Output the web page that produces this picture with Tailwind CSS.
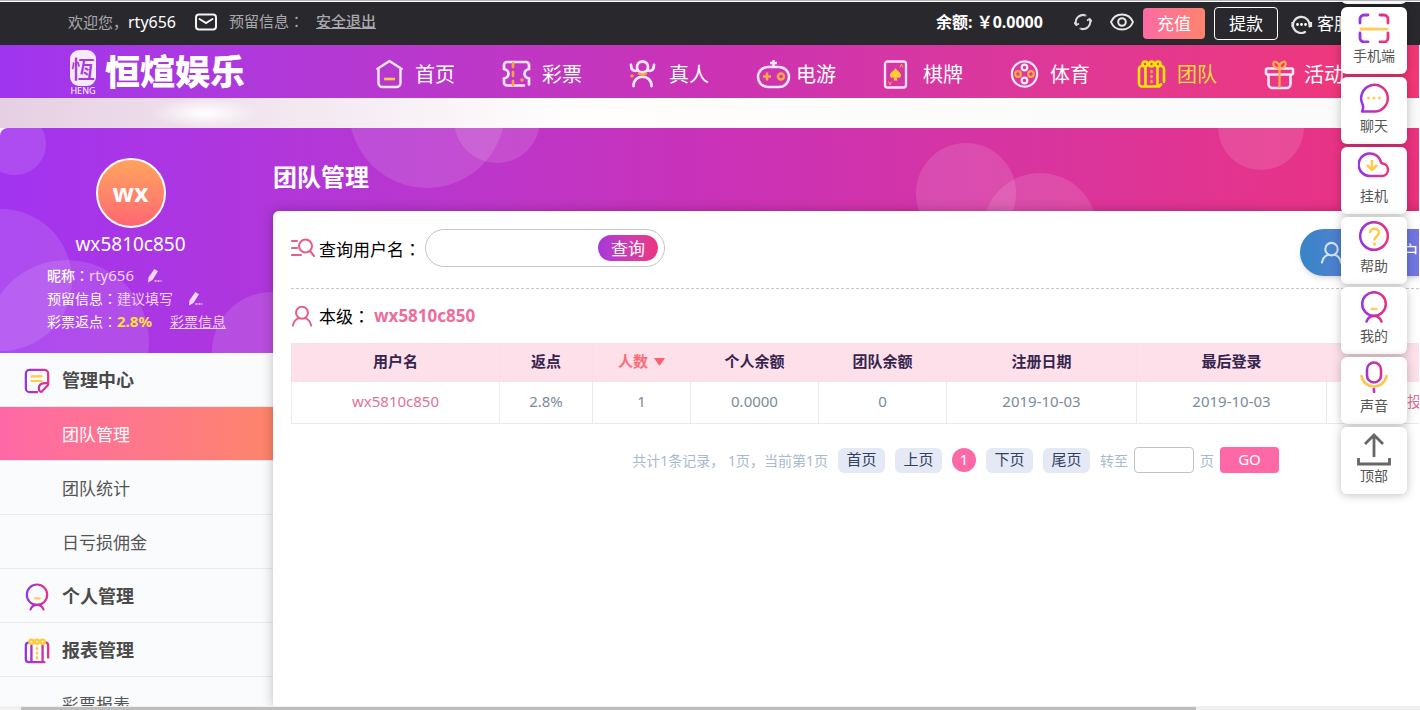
<!DOCTYPE html>
<html lang="zh-CN">
<head>
<meta charset="utf-8">
<title>团队管理</title>
<script src="https://cdn.jsdelivr.net/npm/@tailwindcss/browser@4"></script>
</head>
<body class="relative flex h-screen flex-col overflow-hidden border-t border-[#b4b4b8] bg-white font-['Noto_Sans','Noto_Sans_CJK_SC',sans-serif] text-[15px] text-[#222]">

<svg class="absolute h-0 w-0" aria-hidden="true">
  <defs>
    <linearGradient id="pg" gradientUnits="userSpaceOnUse" x1="2" y1="0" x2="30" y2="0"><stop offset="0" stop-color="#9333ea"/><stop offset="1" stop-color="#ee3377"/></linearGradient>
    <symbol id="person" viewBox="0 0 24 24"><g fill="none" stroke="currentColor" stroke-width="2.200" stroke-linecap="round"><circle cx="12" cy="8.500" r="6.500"/><path d="M2 22.500C3 17.500 6 15 9 14.300M22 22.500C21 17.500 18 15 15 14.300"/></g></symbol>
    <symbol id="edit" viewBox="0 0 16 16"><path d="M2.500 9.500L8.300 1l3.700 2.200L6.500 12l-4.500 2.500z" fill="#f0d8fb"/><path d="M8.500 13h7" stroke="#f0d8fb" stroke-width="1.600" stroke-dasharray="2 1"/></symbol>
  </defs>
</svg>

<header class="mt-px flex h-[43px] shrink-0 items-center overflow-hidden bg-[#29282c] pb-1 pl-[68px] text-[#a9a9ad]">
  <span class="w-[127px] shrink-0 whitespace-nowrap">欢迎您，<span class="text-[16px] text-white">rty656</span></span>
  <svg class="w-[22px] shrink-0" height="18" viewBox="0 0 22 18" fill="none" stroke="#f4f4f4" stroke-width="2"><rect x="1" y="1.500" width="20" height="15" rx="3"/><path d="M4.500 6l6.500 4 6.500-4" stroke-linecap="round"/></svg>
  <span class="ml-3 w-[87px] shrink-0 whitespace-nowrap">预留信息<span class="font-['Noto_Sans_CJK_TC',sans-serif]" lang="zh-TW">：</span></span>
  <a href="#" class="shrink-0 font-medium underline">安全退出</a>
  <div class="mr-[69px] ml-auto flex shrink-0 items-center">
    <strong class="w-[138px] text-[16px] whitespace-nowrap text-white">余额: ￥0.0000</strong>
    <button aria-label="刷新"><svg width="18" height="18" viewBox="0 0 18 18" fill="none" stroke="#dcdcdc" stroke-width="2"><path d="M2.300 11.500A7 7 0 0 1 11 2.300M15.700 6.500A7 7 0 0 1 7 15.700"/><path d="M4.500 3.700A7 7 0 0 1 12.500 2.900M13.500 14.300a7 7 0 0 1-8 .8" opacity=".6"/><path d="M0 9.500l2.300 2.700L5 10.500M18 8.500l-2.300-2.700L13 7.500" stroke-width="1.500"/></svg></button>
    <button aria-label="显示余额" class="ml-[18px]"><svg width="24" height="18" viewBox="0 0 24 18" fill="none" stroke="#e8e8e8" stroke-width="2"><path d="M1 9c2-5 6.500-7.600 11-7.600S21 4 23 9c-2 5-6.500 7.600-11 7.600S3 14 1 9z"/><circle cx="12" cy="9" r="3.800"/></svg></button>
    <button class="mt-1 ml-[9px] h-[31px] w-[62px] rounded bg-linear-to-r from-[#fd6aa3] to-[#fe836c] text-[17px] text-white">充值</button>
    <button class="mt-1 ml-[9px] h-[33px] w-[64px] rounded border border-white text-[17px] text-white">提款</button>
    <a href="#" class="mt-1 ml-[13px] flex items-center gap-1 text-[17px] text-white"><svg width="22" height="20" viewBox="0 0 22 20" fill="none" stroke="#e4e4e4" stroke-width="2.200"><path d="M2.500 14A8.300 8.300 0 1 1 18.500 12.500M2.500 14a8.300 8.300 0 0 0 11.500 4" stroke-linecap="round"/><path d="M1.500 8v5M20 8v5"/><g fill="#fff" stroke="none"><circle cx="6.500" cy="10.500" r="1.400"/><circle cx="10.500" cy="10.500" r="1.400"/><circle cx="14.500" cy="10.500" r="1.400"/></g></svg>客服</a>
  </div>
</header>

<nav class="mr-px flex h-[53px] shrink-0 items-center overflow-hidden bg-linear-to-r from-[#a035f0] via-[#cb32b4] to-[#f33675] pl-[70px] text-[20px] text-white">
  <a href="#" class="flex w-[305px] shrink-0 items-center gap-[9px]" aria-label="恒煊娱乐">
    <span class="flex w-[26px] flex-col items-center pt-0.5">
      <span class="flex h-[36px] w-[26px] items-center justify-center rounded-[9px] bg-white/90 font-['Noto_Sans_CJK_TC',sans-serif] text-[24px] leading-none font-medium text-[#ab36dd]">恆</span>
      <span class="text-[9px] leading-[10px]">HENG</span>
    </span>
    <span class="text-[35px] leading-none font-black">恒煊娱乐</span>
  </a>
  <div class="flex shrink-0 pt-1.5">
    <a href="#" class="flex w-[127px] shrink-0 items-center"><svg class="mr-2 w-8" height="32" viewBox="0 0 32 32" fill="none" stroke="#fbe6fa" stroke-width="2.400" stroke-linejoin="round"><path d="M1.500 10.500L14.500 2 27.500 10.500M3.500 10v14a4 4 0 0 0 4 4h14a4 4 0 0 0 4-4V10"/><path d="M9 20h11" stroke="#fc4" stroke-width="2.600"/></svg>首页</a>
    <a href="#" class="flex w-[127px] shrink-0 items-center"><svg class="mr-2 w-8" height="32" viewBox="0 0 32 32" fill="none" stroke="#fbe6fa" stroke-width="2.700" stroke-linecap="round"><path d="M22 26.500H5a3 3 0 0 1-3-3v-4c6-1.500 6-8 0-9.500v-4a3 3 0 0 1 3-3h19a3 3 0 0 1 3 3v4c-6 1.500-6 8 0 9.500v6"/><path d="M11 4v22" stroke="#fca23a" stroke-dasharray="4 5"/><circle cx="20" cy="21" r="1" stroke="#fca23a" stroke-width="1.500"/></svg>彩票</a>
    <a href="#" class="flex w-[127px] shrink-0 items-center"><svg class="mr-2 w-8" height="32" viewBox="0 0 32 32" fill="none" stroke="#fbe6fa" stroke-width="2.800" stroke-linecap="round"><circle cx="13.500" cy="8" r="5.500"/><path d="M2 6c0 5 2.500 6.500 6 5.500M25 6c0 5-2.500 6.500-6 5.500M4.500 27c0-12.500 18-12.500 18 0"/><path d="M10 14.500c2 1.500 5 1.500 7 0" stroke="#fca23a"/><circle cx="3" cy="17" r="1.300" fill="#fca23a" stroke="#fca23a" stroke-width="1"/></svg>真人</a>
    <a href="#" class="flex w-[127px] shrink-0 items-center"><svg class="mr-1 w-9" height="32" viewBox="0 0 36 32" fill="none" stroke="#fbe6fa" stroke-width="2.500"><rect x="2" y="8" width="31" height="20" rx="10"/><path d="M17.500 1v7M14 4h7"/><path d="M11 13.500v8M7 17.500h8" stroke="#fca84a"/><circle cx="25" cy="17.500" r="3" stroke="#fca84a"/></svg>电游</a>
    <a href="#" class="flex w-[127px] shrink-0 items-center"><svg class="mr-2 w-8" height="32" viewBox="0 0 32 32" fill="none" stroke="#fbe6fa" stroke-width="2.300"><rect x="2" y="2.500" width="21" height="26" rx="2.500"/><path d="M12.500 9c1.500 3 5.500 4 5.500 7.500 0 2.500-3 3-4.500 1.500l1 3.500h-4l1-3.500C10 19.500 7 19 7 16.500 7 13 11 12 12.500 9z" fill="#fc3" stroke="none"/><path d="M17 8.500l1.500-3.500L20 8.500M5.500 22.500L7 26l1.500-3.500" stroke="#fca23a" stroke-width="1"/></svg>棋牌</a>
    <a href="#" class="flex w-[127px] shrink-0 items-center"><svg class="mr-2 w-8" height="32" viewBox="0 0 32 32" fill="none" stroke="#fbe6fa" stroke-width="2.200"><circle cx="14.500" cy="15" r="12.600"/><circle cx="14.500" cy="8.500" r="2.800"/><circle cx="14.500" cy="21.500" r="2.800"/><g stroke="#fca84a"><circle cx="8" cy="15" r="2.800"/><circle cx="21" cy="15" r="2.800"/></g></svg>体育</a>
    <a href="#" class="flex w-[127px] shrink-0 items-center text-[#ffdf2a]"><svg class="mr-2 w-8" height="32" viewBox="0 0 32 32" fill="none" stroke="#ffe600" stroke-width="2.600" stroke-linecap="round"><path d="M22 27.500H5a3 3 0 0 1-3-3V10a3 3 0 0 1 3-3M8.500 8v19M20.500 8v19M24 7a3 3 0 0 1 3 3v13M22 27.500l2-2"/><path d="M14.500 12v12" stroke="#ffab2e" stroke-dasharray="1 4"/><circle cx="8" cy="5" r="2.500"/><circle cx="14.500" cy="5" r="2.500"/><circle cx="21" cy="5" r="2.500"/></svg>团队</a>
    <a href="#" class="flex w-[127px] shrink-0 items-center"><svg class="mr-2 w-8" height="32" viewBox="0 0 32 32" fill="none" stroke="#fbe6fa" stroke-width="2.600"><rect x="2" y="9.500" width="27" height="6" rx="1.500"/><path d="M4.500 16v9a4 4 0 0 0 4 4h14a4 4 0 0 0 4-4v-9"/><path d="M15.500 9v20M15.500 9C8 10 8 1 12 3c2 .8 3.500 3 3.500 6zM15.500 9c7.500 1 7.500-8 3.500-6-2 .8-3.500 3-3.500 6z" stroke="#fcb04a" stroke-width="2.200"/></svg>活动</a>
  </div>
</nav>

<div class="h-[30px] shrink-0 overflow-hidden bg-linear-to-r from-[#e6cfe3] via-[#fffefd] via-40% to-[#fafafa]">
  <div class="ml-[150px] h-full w-[110px] bg-radial from-white to-transparent to-70%"></div>
</div>

<main class="relative mr-px flex min-h-0 flex-1 overflow-hidden">
  <div class="absolute inset-x-0 top-0 h-[225px] overflow-hidden rounded-tl-lg bg-linear-to-r from-[#a233f0] via-[#c931b8] to-[#ec317f]">
    <svg width="1420" height="225" viewBox="0 0 1420 225" fill="#fff" fill-opacity=".12"><circle cx="15" cy="16" r="31"/><circle cx="1" cy="152" r="71"/><circle cx="67" cy="214" r="82"/><circle cx="272" cy="224" r="60"/><circle cx="427" cy="-18" r="78"/><circle cx="497" cy="-8" r="43"/><circle cx="966" cy="65" r="50"/><circle cx="1040" cy="102" r="57"/><circle cx="1261" cy="-1" r="43"/></svg>
  </div>

  <aside class="relative flex w-[273px] shrink-0 flex-col">
    <section class="flex h-[225px] shrink-0 flex-col pt-[30px] text-[14px] leading-[23px] text-white">
      <div class="flex flex-col items-center pr-3">
        <div class="flex size-[70px] items-center justify-center rounded-full border-2 border-white bg-linear-to-b from-[#ffa45c] to-[#ff6672] pb-0.5 text-[25px] font-bold">wx</div>
        <div class="mt-[3px] mb-[6px] text-[19px] leading-[27px]">wx5810c850</div>
      </div>
      <div class="flex items-center pl-[47px]"><span class="font-medium">昵称<span class="font-['Noto_Sans_CJK_TC',sans-serif]" lang="zh-TW">：</span></span><span class="text-[15px] text-[#f0d4fb]">rty656</span><button aria-label="修改昵称" class="ml-3"><svg width="16" height="16"><use href="#edit"/></svg></button></div>
      <div class="flex items-center pl-[47px]"><span>预留信息<span class="font-['Noto_Sans_CJK_TC',sans-serif]" lang="zh-TW">：</span></span><span class="text-[#f0d4fb]">建议填写</span><button aria-label="修改预留信息" class="ml-3.5"><svg width="16" height="16"><use href="#edit"/></svg></button></div>
      <div class="flex items-center pl-[47px]"><span>彩票返点<span class="font-['Noto_Sans_CJK_TC',sans-serif]" lang="zh-TW">：</span></span><strong class="text-[15px] text-[#ffe034]">2.8%</strong><a href="#" class="ml-[18px] text-[#f0d4fb] underline">彩票信息</a></div>
    </section>
    <nav class="min-h-0 flex-1 overflow-hidden bg-[#fafbfd] text-[17px] text-[#555] *:pt-0.5">
      <a href="#" class="flex h-[54px] items-center border-b border-[#e8eaf0] pl-[24px] text-[18px] font-bold text-[#4a4a4a]"><svg class="mr-[12px] w-[26px]" height="28" viewBox="0 0 28 30" fill="none" stroke="url(#pg)" stroke-width="2.400" stroke-linejoin="round"><path d="M15 27H6a4 4 0 0 1-4-4V7a4 4 0 0 1 4-4h16a4 4 0 0 1 4 4v12l-7 7.500c-4 1-4-7 0-8.500 2-1 5-.5 7-1"/><path d="M7 10h13M7 15h13" stroke="#fc4"/></svg>管理中心</a>
      <a href="#" class="flex h-[54px] items-center border-b border-[#e8eaf0] bg-linear-to-r from-[#fe68a6] to-[#fe846a] pl-[62px] text-white">团队管理</a>
      <a href="#" class="flex h-[54px] items-center border-b border-[#e8eaf0] pl-[62px]">团队统计</a>
      <a href="#" class="flex h-[54px] items-center border-b border-[#e8eaf0] pl-[62px]">日亏损佣金</a>
      <a href="#" class="flex h-[54px] items-center border-b border-[#e8eaf0] pl-[24px] text-[18px] font-bold text-[#4a4a4a]"><svg class="mr-[12px] w-[26px]" height="28" viewBox="0 0 28 30" fill="none" stroke="url(#pg)" stroke-width="2.300" stroke-linecap="round"><circle cx="14" cy="12.500" r="11"/><path d="M7 28.500c1-3 4-5 7-5s6 2 7 5"/><path d="M12 16.500h5" stroke="#fc5"/></svg>个人管理</a>
      <a href="#" class="flex h-[54px] items-center border-b border-[#e8eaf0] pl-[24px] text-[18px] font-bold text-[#4a4a4a]"><svg class="mr-[12px] w-[26px]" height="28" viewBox="0 0 28 30" fill="none" stroke="url(#pg)" stroke-width="2.500" stroke-linecap="round"><path d="M22 27H5a3 3 0 0 1-3-3V9a3 3 0 0 1 3-3M8 9v17M20 9v17M24 6a3 3 0 0 1 2 3v13"/><g stroke="#fc3"><path d="M14 12v12" stroke-dasharray="1 4"/><circle cx="8" cy="5" r="2.300"/><circle cx="14" cy="5" r="2.300"/><circle cx="20" cy="5" r="2.300"/></g></svg>报表管理</a>
      <a href="#" class="flex h-[54px] items-center pl-[62px]">彩票报表</a>
    </nav>
  </aside>

  <section class="relative flex min-w-0 flex-1 flex-col">
    <h1 class="flex h-[83px] shrink-0 items-center pt-3.5 text-[24px] font-bold text-white">团队管理</h1>
    <div class="min-h-0 flex-1 overflow-hidden rounded-tl-md bg-white pl-[18px] shadow-[0_0_12px_rgba(0,0,0,0.25)]">
      <div class="flex h-[78px] items-start border-b border-dashed border-[#c8c8c8] pt-[18px]">
        <form class="flex items-center text-[17px] text-black" onsubmit="return false">
          <svg class="mr-1 w-6" height="20" viewBox="0 0 24 20" fill="none" stroke="#e2608c" stroke-width="2.100" stroke-linecap="round"><path d="M1 3h5M1 10h5M1 17h9"/><circle cx="14.500" cy="8" r="6.500"/><path d="M19 13l4 5"/></svg>
          <label for="user" class="w-[106px] pt-0.5 whitespace-nowrap">查询用户名<span class="font-['Noto_Sans_CJK_TC',sans-serif]" lang="zh-TW">：</span></label>
          <div class="flex h-[38px] w-[240px] items-center rounded-full border border-[#c5c5c5] pl-4">
            <input id="user" class="h-7 min-w-0 flex-1 outline-none">
            <button class="mr-1.5 h-[26px] w-[60px] rounded-full bg-linear-to-r from-[#a935dc] to-[#ee3380] text-[17px] leading-none text-white">查询</button>
          </div>
        </form>
        <a href="#" class="-mr-8 ml-auto flex h-[47px] w-[151px] shrink-0 items-center gap-1 rounded-full bg-linear-to-r from-[#3585c6] to-[#8070ea] pl-5 text-[18px] whitespace-nowrap text-white shadow-md"><svg width="23" height="23" class="text-[#cfe3f5]"><use href="#person"/></svg>下级开户</a>
      </div>
      <div class="flex h-[54px] items-center text-[17px] text-black"><svg width="22" height="22" class="mr-1.5 text-[#e2608c]"><use href="#person"/></svg><span class="w-[55px] whitespace-nowrap">本级<span class="font-['Noto_Sans_CJK_TC',sans-serif]" lang="zh-TW">：</span></span><strong class="text-[#ee6c9c]">wx5810c850</strong></div>
      <table class="w-[1225px] table-fixed border-collapse text-center text-[#7c8b9a]">
        <colgroup><col class="w-[208px]"><col class="w-[93px]"><col class="w-[98px]"><col class="w-[128px]"><col class="w-[128px]"><col class="w-[190px]"><col class="w-[190px]"><col class="w-[190px]"></colgroup>
        <thead class="bg-[#fde0ea] text-[#35254d]">
          <tr class="h-[38px] *:border *:border-[#f6e0ec] *:p-0 *:pb-0.5 *:font-bold">
            <th>用户名</th><th>返点</th><th class="text-[#fb6b78]"><span class="flex items-center justify-center gap-1.5">人数<svg width="11" height="8" viewBox="0 0 11 8"><path d="M0 0h11L5.500 8z" fill="#fb5f70"/></svg></span></th><th>个人余额</th><th>团队余额</th><th>注册日期</th><th>最后登录</th><th></th>
          </tr>
        </thead>
        <tbody>
          <tr class="h-[42px] *:border *:border-[#e6ebf1] *:p-0 *:pb-0.5">
            <td><a href="#" class="text-[#e0719a]">wx5810c850</a></td><td>2.8%</td><td>1</td><td>0.0000</td><td>0</td><td>2019-10-03</td><td>2019-10-03</td><td class="text-left"><a href="#" class="ml-20 text-[#e0719a]">投注</a></td>
          </tr>
        </tbody>
      </table>
      <div class="mt-[23px] flex items-center justify-end gap-[10px] pr-[140px] text-[#33405e]">
        <span class="text-[14px] text-[#a9b9cf]">共计1条记录， 1页，当前第1页</span>
        <button class="h-[25px] w-[47px] rounded-md bg-[#e4e9f5] pb-0.5 leading-none">首页</button>
        <button class="h-[25px] w-[47px] rounded-md bg-[#e4e9f5] pb-0.5 leading-none">上页</button>
        <button class="size-6 rounded-full bg-[#fe68a6] pb-0.5 leading-none text-white">1</button>
        <button class="h-[25px] w-[47px] rounded-md bg-[#e4e9f5] pb-0.5 leading-none">下页</button>
        <button class="h-[25px] w-[47px] rounded-md bg-[#e4e9f5] pb-0.5 leading-none">尾页</button>
        <div class="flex items-center gap-1.5 text-[14px] text-[#a9b9cf]"><label for="page">转至</label><input id="page" class="h-[26px] w-[60px] rounded border border-[#bfc2c8] px-2"><span>页</span><button class="h-[26px] w-[59px] rounded bg-[#fe68a6] pb-0.5 text-[15px] leading-none text-white">GO</button></div>
      </div>
    </div>
  </section>
</main>

<div class="h-1 shrink-0 bg-[#f0f0f0] pt-px pl-[21px]"><div class="h-full w-[84%] bg-[#bdbdbd]"></div></div>

<aside class="absolute -top-16 right-[13px] flex w-[66px] flex-col gap-[3px] text-[14px] leading-[18px] text-[#555] *:flex *:h-[67px] *:shrink-0 *:flex-col *:items-center *:gap-1 *:rounded-md *:bg-white *:pt-1 *:shadow-[0_1px_10px_rgba(0,0,0,0.25)]">
  <button aria-label="更多"></button>
  <button><svg width="32" height="32" viewBox="0 0 32 32" fill="none" stroke="url(#pg)" stroke-width="2.800" stroke-linecap="round"><path d="M2 12V8a4 4 0 0 1 4-4h4M22 4h4a4 4 0 0 1 4 4v4M30 22v5a4 4 0 0 1-4 4h-4M10 31H6a4 4 0 0 1-4-4v-5"/><path d="M3 18l26 .1" stroke="#fc5"/></svg><span>手机端</span></button>
  <button><svg width="32" height="32" viewBox="0 0 32 32" fill="none" stroke="url(#pg)" stroke-width="2.500" stroke-linejoin="round"><path d="M4 30.500c1.500-3 1.500-5 .5-7.500A13.300 13.300 0 1 1 16.500 30.500z"/><path d="M10.500 17h13" stroke="#fc5" stroke-width="3" stroke-dasharray="0 5.500" stroke-linecap="round"/></svg><span>聊天</span></button>
  <button><svg width="32" height="32" viewBox="0 0 32 32" fill="none" stroke="url(#pg)" stroke-width="2.500"><path d="M12 25a11.300 11.300 0 1 1 11-13.500l1.500 1a6.300 6.300 0 0 1 0 12.500z"/><path d="M14 9v10M9 14l5 5 5-5" stroke="#fc4"/></svg><span>挂机</span></button>
  <button><svg width="32" height="32" viewBox="0 0 32 32" fill="none" stroke="url(#pg)" stroke-width="2.500"><circle cx="16" cy="15" r="13.800"/><path d="M12 12c0-6 9-5.500 9-.5 0 4-4.500 3-4.500 8M16.500 21.500v3" stroke="#fc4"/></svg><span>帮助</span></button>
  <button><svg width="32" height="32" viewBox="0 0 32 32" fill="none" stroke="url(#pg)" stroke-width="2.500" stroke-linecap="round"><circle cx="16" cy="13" r="11.800"/><path d="M8.500 30.500c1.500-4 4-5.500 7.500-5.500s6 1.500 7.500 5.500"/><path d="M13.500 18h5" stroke="#fc6"/></svg><span>我的</span></button>
  <button><svg width="32" height="32" viewBox="0 0 32 32" fill="none" stroke="url(#pg)" stroke-width="2.600" stroke-linecap="round"><rect x="9" y="1.500" width="14" height="20" rx="7"/><path d="M3.500 15c2.500 14 22.500 14 25 0" stroke="#f9c74a"/><path d="M15.900 28l.2 3"/></svg><span>声音</span></button>
  <button><svg width="36" height="34" viewBox="0 0 36 34" class="mt-px -mb-[3px]" fill="none" stroke="#666" stroke-width="2.800"><path d="M18 25V3M9 12l9-9 9 9M2.500 26v6h31v-6"/></svg><span>顶部</span></button>
</aside>
</body>
</html>
